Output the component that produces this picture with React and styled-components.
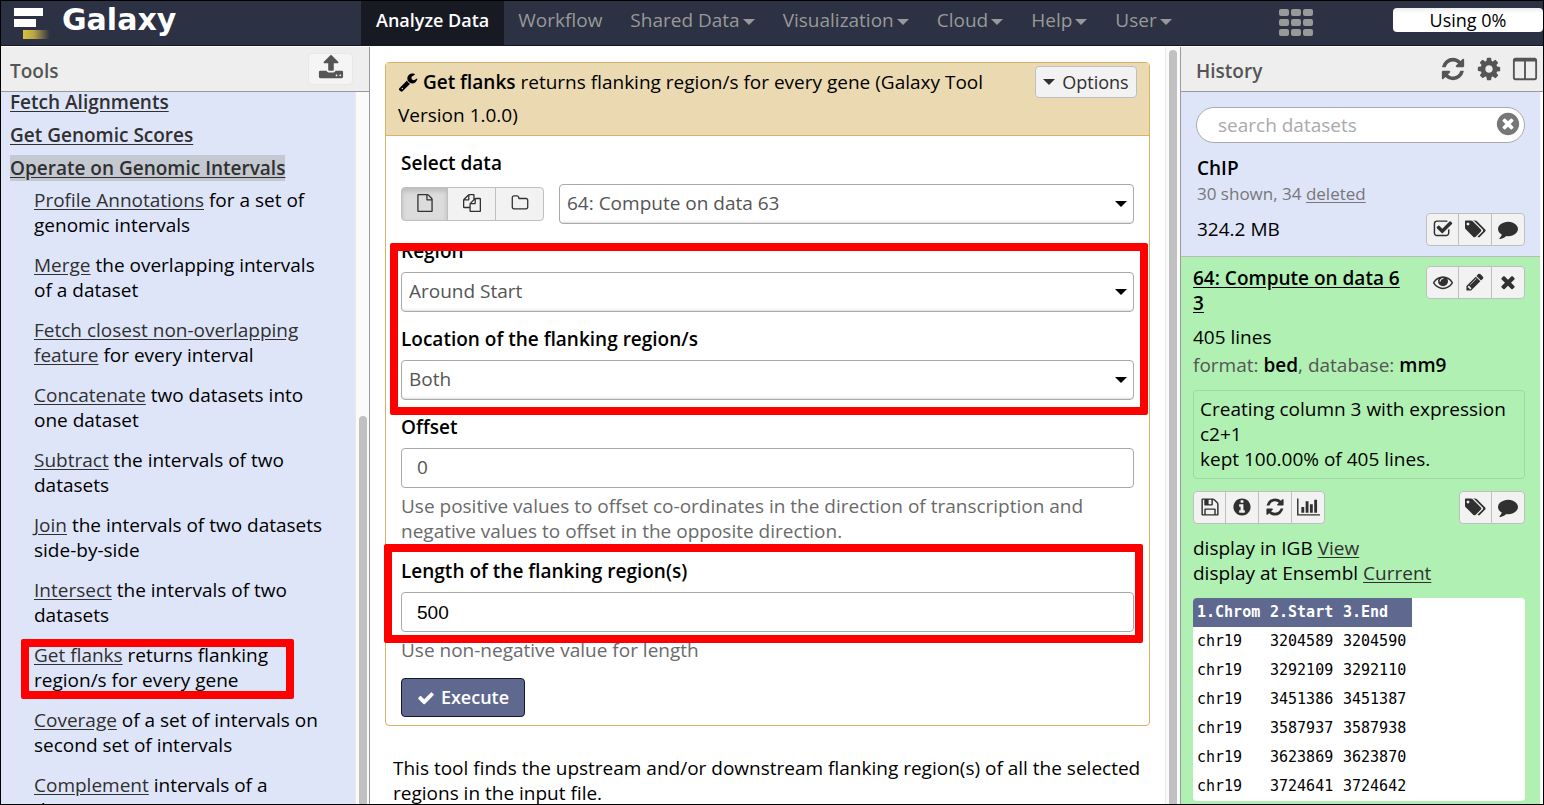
import React from "react";
import styled, { createGlobalStyle, css } from "styled-components";

const GlobalStyle = createGlobalStyle`
  *, *::before, *::after { box-sizing: border-box; }
  body {
    margin: 0;
    font-family: "Open Sans", "Noto Sans", sans-serif;
    font-size: 19px;
    line-height: 25px;
    color: #000;
    background: #fff;
  }
  button, input, select { font: inherit; color: inherit; margin: 0; }
  p, h1, h2, h3 { margin: 0; font-size: inherit; }
`;

/* ---------- icons ---------- */

const ICONS = {
  upload: [1792, 1792, "M1344 1472q0-26-19-45t-45-19-45 19-19 45 19 45 45 19 45-19 19-45zm256 0q0-26-19-45t-45-19-45 19-19 45 19 45 45 19 45-19 19-45zm128-224v320q0 40-28 68t-68 28h-1472q-40 0-68-28t-28-68v-320q0-40 28-68t68-28h427q21 56 70.5 92t110.5 36h256q61 0 110.5-36t70.5-92h427q40 0 68 28t28 68zm-325-648q-17 40-59 40h-256v448q0 26-19 45t-45 19h-256q-26 0-45-19t-19-45v-448h-256q-42 0-59-40-17-39 14-69l448-448q18-19 45-19t45 19l448 448q31 30 14 69z"],
  wrench: [1792, 1792, "M448 1472q0-26-19-45t-45-19-45 19-19 45 19 45 45 19 45-19 19-45zm644-420l-682 682q-37 37-90 37-52 0-91-37l-106-108q-38-36-38-90 0-53 38-91l681-681q39 98 114.5 173.5t173.5 114.5zm634-435q0 39-23 106-47 134-164.5 217.5t-258.5 83.5q-185 0-316.5-131.5t-131.5-316.5 131.5-316.5 316.5-131.5q58 0 121.5 16.5t107.5 46.5q16 11 16 28t-16 28l-293 169v224l193 107q5-3 79-48.5t135.5-81 70.5-35.5q15 0 23.5 10t8.5 25z"],
  refresh: [1792, 1792, "M1639 1056q0 5-1 7-64 268-268 434.5t-478 166.5q-146 0-282.5-55t-243.5-157l-129 129q-19 19-45 19t-45-19-19-45v-448q0-26 19-45t45-19h448q26 0 45 19t19 45-19 45l-137 137q71 66 161 102t187 36q134 0 250-65t186-179q11-17 53-117 8-23 30-23h192q13 0 22.5 9.5t9.5 22.5zm25-800v448q0 26-19 45t-45 19h-448q-26 0-45-19t-19-45 19-45l138-138q-148-137-349-137-134 0-250 65t-186 179q-11 17-53 117-8 23-30 23h-199q-13 0-22.5-9.5t-9.5-22.5v-7q65-268 270-434.5t480-166.5q146 0 284 55.5t245 156.5l130-129q19-19 45-19t45 19 19 45z"],
  cog: [1792, 1792, "M1152 896q0-106-75-181t-181-75-181 75-75 181 75 181 181 75 181-75 75-181zm512-109v222q0 12-8 23t-20 13l-185 28q-19 54-39 91 35 50 107 138 10 12 10 25t-9 23q-27 37-99 108t-94 71q-12 0-26-9l-138-108q-44 23-91 38-16 136-29 186-7 28-36 28h-222q-14 0-24.5-8.5t-11.5-21.5l-28-184q-49-16-90-37l-141 107q-10 9-25 9-14 0-25-11-126-114-165-168-7-10-7-23 0-12 8-23 15-21 51-66.5t54-70.5q-27-50-41-99l-183-27q-13-2-21-12.5t-8-23.5v-222q0-12 8-23t19-13l186-28q14-46 39-92-40-57-107-138-10-12-10-24 0-10 9-23 26-36 98.5-107.5t94.5-71.5q13 0 26 10l138 107q44-23 91-38 16-136 29-186 7-28 36-28h222q14 0 24.5 8.5t11.5 21.5l28 184q49 16 90 37l142-107q9-9 24-9 13 0 25 10 129 119 165 170 7 8 7 22 0 12-8 23-15 21-51 66.5t-54 70.5q26 50 41 98l183 28q13 2 21 12.5t8 23.5z"],
  columns: [1792, 1792, "M224 128h1344q66 0 113 47t47 113v1216q0 66-47 113t-113 47h-1344q-66 0-113-47t-47-113v-1216q0-66 47-113t113-47zm0 256q-32 0-32 32v1088q0 32 32 32h608v-1152zm736 0v1152h608q32 0 32-32v-1088q0-32-32-32z"],
  times: [1792, 1792, "M1490 1322q0 40-28 68l-136 136q-28 28-68 28t-68-28l-294-294-294 294q-28 28-68 28t-68-28l-136-136q-28-28-28-68t28-68l294-294-294-294q-28-28-28-68t28-68l136-136q28-28 68-28t68 28l294 294 294-294q28-28 68-28t68 28l136 136q28 28 28 68t-28 68l-294 294 294 294q28 28 28 68z"],
  check: [1792, 1792, "M1671 566q0 40-28 68l-724 724-136 136q-28 28-68 28t-68-28l-136-136-362-362q-28-28-28-68t28-68l136-136q28-28 68-28t68 28l294 295 656-657q28-28 68-28t68 28l136 136q28 28 28 68z"],
  timesCircle: [1792, 1792, "M1277 1122q0-26-19-45l-181-181 181-181q19-19 19-45 0-27-19-46l-90-90q-19-19-46-19-26 0-45 19l-181 181-181-181q-19-19-45-19-27 0-46 19l-90 90q-19 19-19 46 0 26 19 45l181 181-181 181q-19 19-19 45 0 27 19 46l90 90q19 19 46 19 26 0 45-19l181-181 181 181q19 19 45 19 27 0 46-19l90-90q19-19 19-46zm387-226q0 209-103 385.5t-279.5 279.5-385.5 103-385.5-103-279.5-279.5-103-385.5 103-385.5 279.5-279.5 385.5-103 385.5 103 279.5 279.5 103 385.5z"],
  info: [1792, 1792, "M1152 1376v-160q0-14-9-23t-23-9h-96v-512q0-14-9-23t-23-9h-320q-14 0-23 9t-9 23v160q0 14 9 23t23 9h96v320h-96q-14 0-23 9t-9 23v160q0 14 9 23t23 9h448q14 0 23-9t9-23zm-128-896v-160q0-14-9-23t-23-9h-192q-14 0-23 9t-9 23v160q0 14 9 23t23 9h192q14 0 23-9t9-23zm640 416q0 209-103 385.5t-279.5 279.5-385.5 103-385.5-103-279.5-279.5-103-385.5 103-385.5 279.5-279.5 385.5-103 385.5 103 279.5 279.5 103 385.5z"],
  comment: [1792, 1792, "M1792 896q0 174-120 321.5t-326 233-450 85.5q-70 0-145-8-198 175-460 242-49 14-114 22-17 2-30.5-9t-17.5-29v-1q-3-4-.5-12t2-10 4.5-9.5l6-9 7-8.5 8-9q7-8 31-34.5t34.5-38 31-39.5 32.5-51 27-59 26-76q-157-89-247.5-220t-90.5-281q0-130 71-248.5t191-204.5 286-136.5 348-50.5q244 0 450 85.5t326 233 120 321.5z"],
  pencil: [1792, 1792, "M491 1536l91-91-235-235-91 91v107h128v128h107zm523-928q0-22-22-22-10 0-17 7l-542 542q-7 7-7 17 0 22 22 22 10 0 17-7l542-542q7-7 7-17zm-54-192l416 416-832 832h-416v-416zm683 96q0 53-37 90l-166 166-416-416 166-165q36-38 90-38 53 0 91 38l235 234q37 39 37 91z"],
  eye: [1792, 1792, "M1664 960q-152-236-381-353 61 104 61 225 0 185-131.5 316.5t-316.5 131.5-316.5-131.5-131.5-316.5q0-121 61-225-229 117-381 353 133 205 333.5 326.5t434.5 121.5 434.5-121.5 333.5-326.5zm-720-384q0-20-14-34t-34-14q-125 0-214.5 89.5t-89.5 214.5q0 20 14 34t34 14 34-14 14-34q0-86 61-147t147-61q20 0 34-14t14-34zm848 384q0 34-20 69-140 230-376.5 368.5t-499.5 138.5-499.5-139-376.5-368q-20-35-20-69t20-69q140-229 376.5-368t499.5-139 499.5 139 376.5 368q20 35 20 69z"],
  tags: [1856, 1792, "M384 448q0-53-37.5-90.5t-90.5-37.5-90.5 37.5-37.5 90.5 37.5 90.5 90.5 37.5 90.5-37.5 37.5-90.5zm1067 576q0 53-37 90l-491 492q-39 37-91 37-53 0-90-37l-715-716q-38-37-64.5-101t-26.5-117v-416q0-52 38-90t90-38h416q53 0 117 26.5t102 64.5l715 714q37 39 37 91zm384 0q0 53-37 90l-491 492q-39 37-91 37-36 0-59-14t-53-45l470-470q37-37 37-90 0-52-37-91l-715-714q-38-38-102-64.5t-117-26.5h224q53 0 117 26.5t102 64.5l715 714q37 39 37 91z"],
  checkSquare: [1792, 1792, "M1472 930v318q0 119-84.5 203.5t-203.5 84.5h-832q-119 0-203.5-84.5t-84.5-203.5v-832q0-119 84.5-203.5t203.5-84.5h832q63 0 117 25 15 7 18 23 3 17-9 29l-49 49q-10 10-23 10-3 0-9-2-23-6-45-6h-832q-66 0-113 47t-47 113v832q0 66 47 113t113 47h832q66 0 113-47t47-113v-254q0-13 9-22l64-64q10-10 23-10 6 0 12 3 20 8 20 29zm231-489l-814 814q-24 24-57 24t-57-24l-430-430q-24-24-24-57t24-57l110-110q24-24 57-24t57 24l263 263 647-647q24-24 57-24t57 24l110 110q24 24 24 57t-24 57z"],
  floppy: [1792, 1792, "M512 1536h768v-384h-768v384zm896 0h128v-896q0-14-10-38.5t-20-34.5l-281-281q-10-10-34-20t-39-10v416q0 40-28 68t-68 28h-576q-40 0-68-28t-28-68v-416h-128v1280h128v-416q0-40 28-68t68-28h832q40 0 68 28t28 68v416zm-384-928v-320q0-13-9.5-22.5t-22.5-9.5h-192q-13 0-22.5 9.5t-9.5 22.5v320q0 13 9.5 22.5t22.5 9.5h192q13 0 22.5-9.5t9.5-22.5zm640 32v928q0 40-28 68t-68 28h-1344q-40 0-68-28t-28-68v-1344q0-40 28-68t68-28h928q40 0 88 20t76 48l280 280q28 28 48 76t20 88z"],
  chart: [2048, 1792, "M640 896v512h-256v-512h256zm384-512v1024h-256v-1024h256zm1024 1152v128h-2048v-1536h128v1408h1920zm-640-896v768h-256v-768h256zm384-384v1152h-256v-1152h256z"],
  file: [1792, 1792, "M1596 380q28 28 48 76t20 88v1152q0 40-28 68t-68 28h-1344q-40 0-68-28t-28-68v-1600q0-40 28-68t68-28h896q40 0 88 20t76 48zm-444-244v376h376q-10-29-22-41l-313-313q-12-12-41-22zm384 1528v-1024h-416q-40 0-68-28t-28-68v-416h-768v1536h1280z"],
  files: [1792, 1792, "M1696 384q40 0 68 28t28 68v1216q0 40-28 68t-68 28h-960q-40 0-68-28t-28-68v-288h-544q-40 0-68-28t-28-68v-672q0-40 20-88t48-76l408-408q28-28 76-48t88-20h416q40 0 68 28t28 68v328q68-40 128-40h416zm-544 213l-299 299h299v-299zm-640-384l-299 299h299v-299zm196 647l316-316v-416h-384v416q0 40-28 68t-68 28h-416v640h512v-256q0-40 20-88t48-76zm956 804v-1152h-384v416q0 40-28 68t-68 28h-416v640h896z"],
  folder: [1792, 1792, "M1600 1312v-704q0-40-28-68t-68-28h-704q-40 0-68-28t-28-68v-64q0-40-28-68t-68-28h-320q-40 0-68 28t-28 68v960q0 40 28 68t68 28h1216q40 0 68-28t28-68zm128-704v704q0 92-66 158t-158 66h-1216q-92 0-158-66t-66-158v-960q0-92 66-158t158-66h320q92 0 158 66t66 158v32h672q92 0 158 66t66 158z"],
  caret: [12, 6, "M0 0h12l-6 6z"],
};

const Svg = styled.svg`
  display: block;
  flex: none;
  fill: currentColor;
`;

function Icon({ name, size = 18 }) {
  const [w, h, d] = ICONS[name];
  return (
    <Svg width={Math.round((size * w) / h)} height={size} viewBox={`0 0 ${w} ${h}`} fillRule="evenodd" aria-hidden="true">
      <path d={d} />
    </Svg>
  );
}

/* ---------- page frame ---------- */

const Page = styled.div`
  display: flex;
  flex-direction: column;
  height: 100vh;
  border: 1px solid #000;
  overflow: hidden;
`;

const Masthead = styled.header`
  display: flex;
  flex: none;
  height: 45px;
  background: #2c3143;
  border-bottom: 1px solid #151822;
  color: #999;
`;

const Brand = styled.a`
  display: flex;
  gap: 12px;
  width: 360px;
  padding-left: 13px;
  color: #fff;
  text-decoration: none;
  font: bold 30px/38px "DejaVu Sans", sans-serif;
`;

const Nav = styled.nav`
  display: flex;
`;

const NavLink = styled.a`
  display: flex;
  gap: 3px;
  padding: 7px 14px 0;
  color: inherit;
  text-decoration: none;
  svg { margin-top: 11px; }
  ${(p) => p.$active && css`
    padding: 7px 15px 0;
    background: #181a23;
    color: #fff;
    font-size: 18px;
    font-weight: 600;
  `}
`;

const GridButton = styled.button`
  margin: 0 80px 0 auto;
  padding: 8px 0 0;
  border: 0;
  background: none;
  display: flex;
  color: #999;
`;

const Quota = styled.div`
  width: 150px;
  height: 24px;
  margin-top: 7px;
  border-radius: 4px;
  background: linear-gradient(#ececec, #fff 5px);
  color: #000;
  text-align: center;
  font-size: 18px;
`;

const Columns = styled.div`
  display: flex;
  flex: 1;
  min-height: 0;
  padding-top: 1px;
`;

const SidePanel = styled.aside`
  display: flex;
  flex-direction: column;
  flex: none;
  width: ${(p) => p.$width};
  border-${(p) => p.$edge}: 1px solid #999;
`;

const PanelHead = styled.div`
  display: flex;
  align-items: flex-start;
  justify-content: space-between;
  flex: none;
  height: 45px;
  padding: ${(p) => p.$pad};
  background: #eee;
  border-bottom: 1px solid #999;
  color: #555;
`;

const PanelTitle = styled.h2`
  padding-top: 12px;
  font-weight: 600;
`;

const PanelBody = styled.div`
  display: flex;
  flex: 1;
  min-height: 0;
`;

const Track = styled.div`
  flex: none;
  width: ${(p) => p.$width};
  padding: ${(p) => p.$pad};
  background: #fafafa;
  border-left: 1px solid #e8e8e8;
`;

const Thumb = styled.div`
  width: 8px;
  height: 100%;
  border-radius: 4px 4px 0 0;
  background: #c1c1c1;
`;

const Highlight = styled.div`
  position: absolute;
  inset: ${(p) => p.$inset};
  border: 8px solid #f00;
  border-radius: 2px;
  pointer-events: none;
`;

/* ---------- tools ---------- */

const UploadButton = styled.button`
  display: flex;
  justify-content: center;
  width: 45px;
  height: 32px;
  margin-top: 6px;
  padding: 0;
  border: 1px solid #e8e8e8;
  border-radius: 4px;
  background: #f5f5f5;
  color: #555;
`;

const ToolList = styled.div`
  flex: 1;
  min-width: 0;
  padding: 0 27px 0 9px;
  background: #dfe5f9;
  overflow: hidden;
`;

const ToolScroll = styled.div`
  margin-top: -2px;
`;

const Section = styled.h3`
  margin-bottom: ${(p) => (p.$open ? "7px" : "8px")};
  font-weight: 600;
  white-space: nowrap;
  a {
    color: #303030;
    background: ${(p) => (p.$open ? "#c4c8d1" : "none")};
  }
`;

const Tool = styled.p`
  position: relative;
  margin: 0 0 15px 24px;
`;

const Link = styled.a`
  color: ${(p) => p.$color || "#303030"};
  text-underline-offset: 2px;
`;

/* ---------- tool form ---------- */

const Main = styled.main`
  flex: 1;
  min-width: 0;
  padding: 15px 15px 0;
  overflow: hidden;
`;

const Card = styled.form`
  border: 1px solid #d8b365;
  border-radius: 4px;
`;

const CardHead = styled.div`
  display: flex;
  align-items: flex-start;
  justify-content: space-between;
  gap: 20px;
  padding: 3px 12px;
  border-bottom: 1px solid #d8b365;
  background: #ebd9b2;
  line-height: 33px;
  svg { display: inline-block; vertical-align: -3px; }
  b { font-weight: 600; }
`;

const CardBody = styled.div`
  display: flex;
  flex-direction: column;
  align-items: stretch;
  gap: 15px;
  padding: 15px 15px 8px;
`;

const OptionsButton = styled.button`
  display: flex;
  flex: none;
  align-items: center;
  justify-content: center;
  gap: 7px;
  width: 102px;
  height: 32px;
  padding: 0;
  border: 1px solid #bfbfbf;
  border-radius: 4px;
  background: #f2f2f2;
  color: #303030;
  font-size: 18px;
`;

const Group = styled.div`
  position: relative;
  display: flex;
  flex-direction: column;
  gap: 15px;
`;

const Field = styled.div`
  display: flex;
  flex-direction: column;
`;

const Label = styled.label`
  margin-bottom: 8px;
  font-weight: 600;
`;

const DataRow = styled.div`
  display: flex;
  align-items: center;
  gap: 15px;
`;

const SelectWrap = styled.div`
  position: relative;
  display: flex;
  flex: 1;
  svg {
    position: absolute;
    right: 7px;
    top: 17px;
    pointer-events: none;
  }
`;

const Select = styled.select`
  flex: 1;
  appearance: none;
  height: 40px;
  padding: 0 7px 2px;
  border: 1px solid #aaa;
  border-radius: 4px;
  background: #fff;
  box-shadow: inset 0 -2px 2px -1px #ddd;
  color: #555;
`;

const Input = styled.input`
  height: 40px;
  padding: 0 15px 2px;
  border: 1px solid #aaa;
  border-radius: 4px;
  background: #fff;
  color: #555;
  ${(p) => p.$edited && css`
    padding: 2px 15px 0;
    color: #000;
    font-family: "Liberation Sans", sans-serif;
  `}
`;

const Help = styled.p`
  margin-top: 6px;
  color: #6a6a6a;
`;

const Execute = styled.button`
  display: flex;
  align-items: center;
  align-self: flex-start;
  justify-content: center;
  gap: 6px;
  width: 124px;
  height: 39px;
  padding: 0;
  border: 1px solid #15182a;
  border-radius: 4px;
  background: #5f6990;
  color: #fff;
  font-size: 18px;
  font-weight: 600;
`;

const Blurb = styled.p`
  padding: 30px 0 0 8px;
`;

/* ---------- button strips ---------- */

const Strip = styled.div`
  display: flex;
  flex: none;
  color: #303030;
`;

const StripButton = styled.button`
  display: flex;
  align-items: center;
  justify-content: center;
  width: ${(p) => (p.$wide ? "49px" : "34px")};
  height: ${(p) => (p.$wide ? "34px" : "33px")};
  padding: 0 0 2px;
  border: 1px solid #bfbfbf;
  background: ${(p) => (p.$on ? "#dcdcdc" : "#f2f2f2")};
  box-shadow: ${(p) => (p.$on ? "inset 0 3px 5px #bbb" : "none")};
  & + & { margin-left: -1px; }
  &:first-child {
    width: ${(p) => (p.$wide ? "47px" : "33px")};
    border-radius: 4px 0 0 4px;
  }
  &:last-child { border-radius: 0 4px 4px 0; }
`;

function ButtonStrip({ items, wide, size = 20 }) {
  return (
    <Strip>
      {items.map(([name, label, on]) => (
        <StripButton key={name} type="button" aria-label={label} $wide={wide} $on={on}>
          <Icon name={name} size={size} />
        </StripButton>
      ))}
    </Strip>
  );
}

/* ---------- history ---------- */

const HeadIcons = styled.div`
  display: flex;
  gap: 10px;
  padding-top: 9px;
  button {
    padding: 0;
    border: 0;
    background: none;
  }
`;

const HistoryBody = styled.div`
  flex: 1;
  min-width: 0;
  margin-right: 3px;
  background: #dfe5f9;
  overflow: hidden;
`;

const HistoryTop = styled.div`
  padding: 15px 15px 10px;
  border-bottom: 1px solid #bbb;
`;

const Search = styled.div`
  position: relative;
  display: flex;
  button {
    position: absolute;
    right: 4px;
    top: 4px;
    padding: 0;
    border: 0;
    background: none;
    color: #777;
  }
`;

const SearchInput = styled.input`
  flex: 1;
  min-width: 0;
  height: 36px;
  padding: 0 40px 0 21px;
  border: 1px solid #aaa;
  border-radius: 18px;
  background: #fff;
  &::placeholder { color: #aaa; }
`;

const HistoryName = styled.h3`
  padding: 13px 0 0 1px;
  font-weight: 600;
`;

const Subtle = styled.p`
  padding-left: 1px;
  color: #777;
  font-size: 17px;
`;

const SizeRow = styled.div`
  display: flex;
  align-items: center;
  justify-content: space-between;
  padding: 7px 0 0 1px;
`;

const Dataset = styled.article`
  min-height: 100%;
  padding: 9px 15px 0 12px;
  background: #b0f0b3;
`;

const SplitRow = styled.div`
  display: flex;
  align-items: flex-start;
  justify-content: space-between;
`;

const DatasetTitle = styled.h3`
  width: 214px;
  font-weight: 600;
  word-break: break-all;
`;

const Facts = styled.div`
  padding: 9px 0 9px;
  color: #555;
  b { color: #000; font-weight: 600; }
  p { margin-bottom: 3px; }
  p:first-child { color: #000; }
`;

const Message = styled.div`
  margin-bottom: 12px;
  padding: 6px;
  border: 1px solid #9fd8a3;
  border-radius: 4px;
`;

const Displays = styled.div`
  padding: 12px 0;
`;

const Peek = styled.div`
  border-radius: 4px;
  background: #fff;
  overflow: hidden;
`;

const PeekTable = styled.table`
  border-collapse: collapse;
  font: 15px/25px "DejaVu Sans Mono", monospace;
  th, td {
    width: 73px;
    padding: 2px 4px;
    text-align: left;
    white-space: nowrap;
  }
  th {
    background: #5f6990;
    color: #fff;
  }
`;

const MENUS = ["Shared Data", "Visualization", "Cloud", "Help", "User"];

const TOOLS = [
  ["Profile Annotations", " for a set of genomic intervals"],
  ["Merge", " the overlapping intervals of a dataset"],
  ["Fetch closest non-overlapping feature", " for every interval"],
  ["Concatenate", " two datasets into one dataset"],
  ["Subtract", " the intervals of two datasets"],
  ["Join", " the intervals of two datasets side-by-side"],
  ["Intersect", " the intervals of two datasets"],
  ["Get flanks", " returns flanking region/s for every gene", true],
  ["Coverage", " of a set of intervals on second set of intervals"],
  ["Complement", " intervals of a dataset"],
];

const PEEK = [
  ["chr19", "3204589", "3204590"],
  ["chr19", "3292109", "3292110"],
  ["chr19", "3451386", "3451387"],
  ["chr19", "3587937", "3587938"],
  ["chr19", "3623869", "3623870"],
  ["chr19", "3724641", "3724642"],
];

function GalaxyMark() {
  return (
    <Svg width="36" height="38" viewBox="0 0 36 38" aria-hidden="true">
      <defs>
        <linearGradient id="tail">
          <stop offset="0" stopColor="#d8c040" />
          <stop offset="0.4" stopColor="#b8a545" />
          <stop offset="1" stopColor="#2c3143" />
        </linearGradient>
      </defs>
      <rect x="0" y="7" width="29" height="8" fill="#fff" />
      <rect x="0" y="18" width="22" height="8" fill="#fff" />
      <rect x="9" y="29" width="27" height="9" fill="url(#tail)" />
    </Svg>
  );
}

function SelectField({ id, value }) {
  return (
    <SelectWrap>
      <Select id={id} defaultValue={value}>
        <option>{value}</option>
      </Select>
      <Icon name="caret" size={6} />
    </SelectWrap>
  );
}

export default function App() {
  return (
    <Page>
      <GlobalStyle />
      <Masthead>
        <Brand href="#">
          <GalaxyMark />
          Galaxy
        </Brand>
        <Nav>
          <NavLink href="#" $active>Analyze Data</NavLink>
          <NavLink href="#">Workflow</NavLink>
          {MENUS.map((name) => (
            <NavLink href="#" key={name}>
              {name}
              <Icon name="caret" size={6} />
            </NavLink>
          ))}
        </Nav>
        <GridButton type="button" aria-label="Apps">
          <Svg width="34" height="27" viewBox="0 0 34 27">
            {[0, 12, 24].map((x) => [0, 10, 20].map((y) => (
              <rect key={`${x}-${y}`} x={x} y={y} width="10" height="7" rx="2" />
            )))}
          </Svg>
        </GridButton>
        <Quota>Using 0%</Quota>
      </Masthead>

      <Columns>
        <SidePanel $width="369px" $edge="right">
          <PanelHead $pad="0 16px 0 9px">
            <PanelTitle>Tools</PanelTitle>
            <UploadButton type="button" aria-label="Upload data">
              <Icon name="upload" size={26} />
            </UploadButton>
          </PanelHead>
          <PanelBody>
            <ToolList>
              <ToolScroll>
                <Section><Link href="#">Fetch Alignments</Link></Section>
                <Section><Link href="#">Get Genomic Scores</Link></Section>
                <Section $open><Link href="#">Operate on Genomic Intervals</Link></Section>
                {TOOLS.map(([name, text, marked]) => (
                  <Tool key={name}>
                    <Link href="#">{name}</Link>
                    {text}
                    {marked && <Highlight $inset="-4px 34px -6px -13px" />}
                  </Tool>
                ))}
              </ToolScroll>
            </ToolList>
            <Track $width="14px" $pad="324px 0 0 3px"><Thumb /></Track>
          </PanelBody>
        </SidePanel>

        <Main>
          <Card>
            <CardHead>
              <p>
                <Icon name="wrench" size={20} /> <b>Get flanks</b> returns flanking region/s for every gene (Galaxy Tool Version 1.0.0)
              </p>
              <OptionsButton type="button">
                <Icon name="caret" size={6} />
                Options
              </OptionsButton>
            </CardHead>
            <CardBody>
              <Field>
                <Label htmlFor="data">Select data</Label>
                <DataRow>
                  <ButtonStrip
                    wide
                    size={18}
                    items={[["file", "Single dataset", true], ["files", "Multiple datasets"], ["folder", "Dataset collection"]]}
                  />
                  <SelectField id="data" value="64: Compute on data 63" />
                </DataRow>
              </Field>
              <Group>
                <Field>
                  <Label htmlFor="region">Region</Label>
                  <SelectField id="region" value="Around Start" />
                </Field>
                <Field>
                  <Label htmlFor="location">Location of the flanking region/s</Label>
                  <SelectField id="location" value="Both" />
                </Field>
                <Highlight $inset="4px -14px -15px -11px" />
              </Group>
              <Field>
                <Label htmlFor="offset">Offset</Label>
                <Input id="offset" defaultValue="0" />
                <Help>
                  Use positive values to offset co-ordinates in the direction of transcription and negative values to offset in the opposite direction.
                </Help>
              </Field>
              <Field>
                <Group>
                  <Field>
                    <Label htmlFor="length">Length of the flanking region(s)</Label>
                    <Input id="length" defaultValue="500" $edited />
                  </Field>
                  <Highlight $inset="-15px -9px -11px -17px" />
                </Group>
                <Help>Use non-negative value for length</Help>
              </Field>
              <Execute type="button">
                <Icon name="check" size={18} />
                Execute
              </Execute>
            </CardBody>
          </Card>
          <Blurb>
            This tool finds the upstream and/or downstream flanking region(s) of all the selected regions in the input file.
          </Blurb>
        </Main>
        <Track $width="15px" $pad="3px 0 0 3px"><Thumb /></Track>

        <SidePanel $width="363px" $edge="left">
          <PanelHead $pad="0 5px 0 15px">
            <PanelTitle>History</PanelTitle>
            <HeadIcons>
              <button type="button" aria-label="Refresh history"><Icon name="refresh" size={26} /></button>
              <button type="button" aria-label="History options"><Icon name="cog" size={26} /></button>
              <button type="button" aria-label="View all histories"><Icon name="columns" size={26} /></button>
            </HeadIcons>
          </PanelHead>
          <PanelBody>
            <HistoryBody>
              <HistoryTop>
                <Search>
                  <SearchInput placeholder="search datasets" aria-label="search datasets" />
                  <button type="button" aria-label="Clear search"><Icon name="timesCircle" size={26} /></button>
                </Search>
                <HistoryName>ChIP</HistoryName>
                <Subtle>30 shown, 34 <Link href="#" $color="#777">deleted</Link></Subtle>
                <SizeRow>
                  324.2 MB
                  <ButtonStrip items={[["checkSquare", "Select datasets"], ["tags", "Edit tags"], ["comment", "Edit annotation"]]} />
                </SizeRow>
              </HistoryTop>
              <Dataset>
                <SplitRow>
                  <DatasetTitle><Link href="#" $color="#000">64: Compute on data 63</Link></DatasetTitle>
                  <ButtonStrip items={[["eye", "View data"], ["pencil", "Edit attributes"], ["times", "Delete"]]} />
                </SplitRow>
                <Facts>
                  <p>405 lines</p>
                  <p>format: <b>bed</b>, database: <b>mm9</b></p>
                </Facts>
                <Message>
                  Creating column 3 with expression c2+1<br />
                  kept 100.00% of 405 lines.
                </Message>
                <SplitRow>
                  <ButtonStrip items={[["floppy", "Download"], ["info", "View details"], ["refresh", "Run again"], ["chart", "Visualize"]]} />
                  <ButtonStrip items={[["tags", "Edit dataset tags"], ["comment", "Edit dataset annotation"]]} />
                </SplitRow>
                <Displays>
                  <p>display in IGB <Link href="#">View</Link></p>
                  <p>display at Ensembl <Link href="#">Current</Link></p>
                </Displays>
                <Peek>
                  <PeekTable>
                    <thead>
                      <tr><th>1.Chrom</th><th>2.Start</th><th>3.End</th></tr>
                    </thead>
                    <tbody>
                      {PEEK.map((row) => (
                        <tr key={row[1]}>{row.map((cell) => <td key={cell}>{cell}</td>)}</tr>
                      ))}
                    </tbody>
                  </PeekTable>
                </Peek>
              </Dataset>
            </HistoryBody>
          </PanelBody>
        </SidePanel>
      </Columns>
    </Page>
  );
}
